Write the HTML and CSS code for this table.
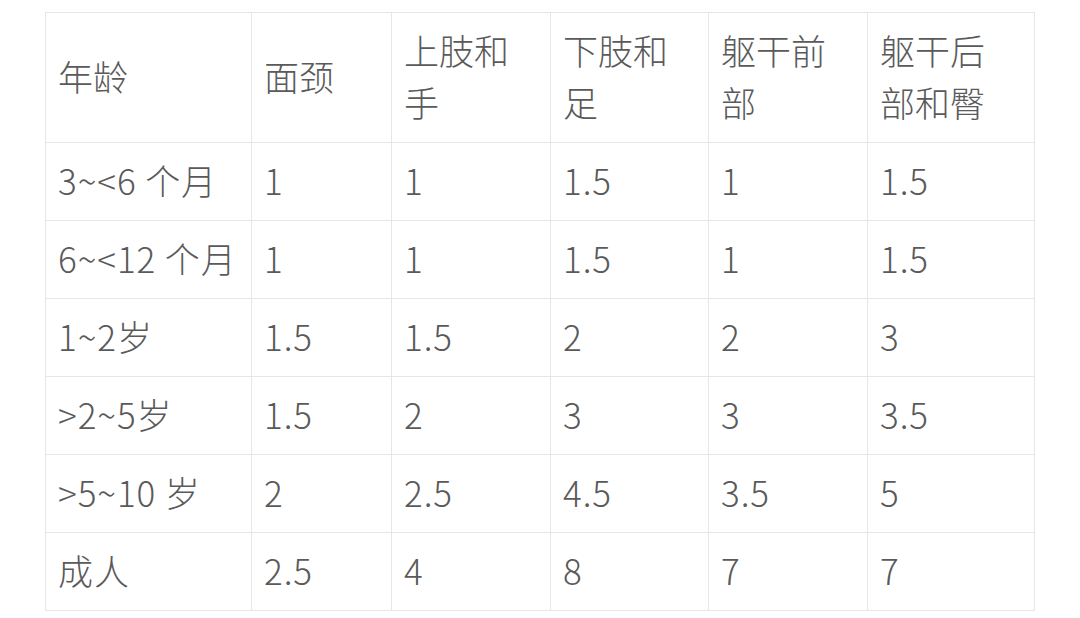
FILE: index.html
```html
<!DOCTYPE html>
<html lang="zh-CN">
<head>
<meta charset="utf-8">
<link rel="stylesheet" href="styles.css">
</head>
<body>
<table class="dose-table">
  <colgroup>
    <col class="c1"><col class="c2"><col class="c3"><col class="c4"><col class="c5"><col class="c6">
  </colgroup>
  <thead>
    <tr><th>年龄</th><th>面颈</th><th>上肢和手</th><th>下肢和足</th><th>躯干前部</th><th>躯干后部和臀</th></tr>
  </thead>
  <tbody>
    <tr><td>3~&lt;6 个月</td><td>1</td><td>1</td><td>1.5</td><td>1</td><td>1.5</td></tr>
    <tr><td>6~&lt;12 个月</td><td>1</td><td>1</td><td>1.5</td><td>1</td><td>1.5</td></tr>
    <tr><td>1~2岁</td><td>1.5</td><td>1.5</td><td>2</td><td>2</td><td>3</td></tr>
    <tr><td>&gt;2~5岁</td><td>1.5</td><td>2</td><td>3</td><td>3</td><td>3.5</td></tr>
    <tr><td>&gt;5~10 岁</td><td>2</td><td>2.5</td><td>4.5</td><td>3.5</td><td>5</td></tr>
    <tr><td>成人</td><td>2.5</td><td>4</td><td>8</td><td>7</td><td>7</td></tr>
  </tbody>
</table>
</body>
</html>
```
FILE: styles.css
```css
html, body {
  margin: 0;
  padding: 0;
  background: #ffffff;
}
body {
  padding: 12px 0 0 45px;
  font-family: "Noto Sans CJK SC", "Noto Sans", sans-serif;
  color: #5a5a5a;
}
.dose-table {
  border-collapse: collapse;
  table-layout: fixed;
  width: 989px;
  font-size: 35px;
  line-height: 52px;
}
.c1 { width: 206px; }
.c2 { width: 140px; }
.c3 { width: 159px; }
.c4 { width: 158px; }
.c5 { width: 159px; }
.c6 { width: 167px; }
.dose-table th,
.dose-table td {
  border: 1px solid #e6e6e6;
  padding: 11px 12px 14px 12px;
  text-align: left;
  vertical-align: middle;
  font-weight: 300;
  white-space: normal;
}
.dose-table thead th {
  height: 104px;
}
.dose-table thead th:last-child {
  padding-right: 20px;
}
.dose-table tbody td {
  white-space: nowrap;
  letter-spacing: 0.9px;
}
```
